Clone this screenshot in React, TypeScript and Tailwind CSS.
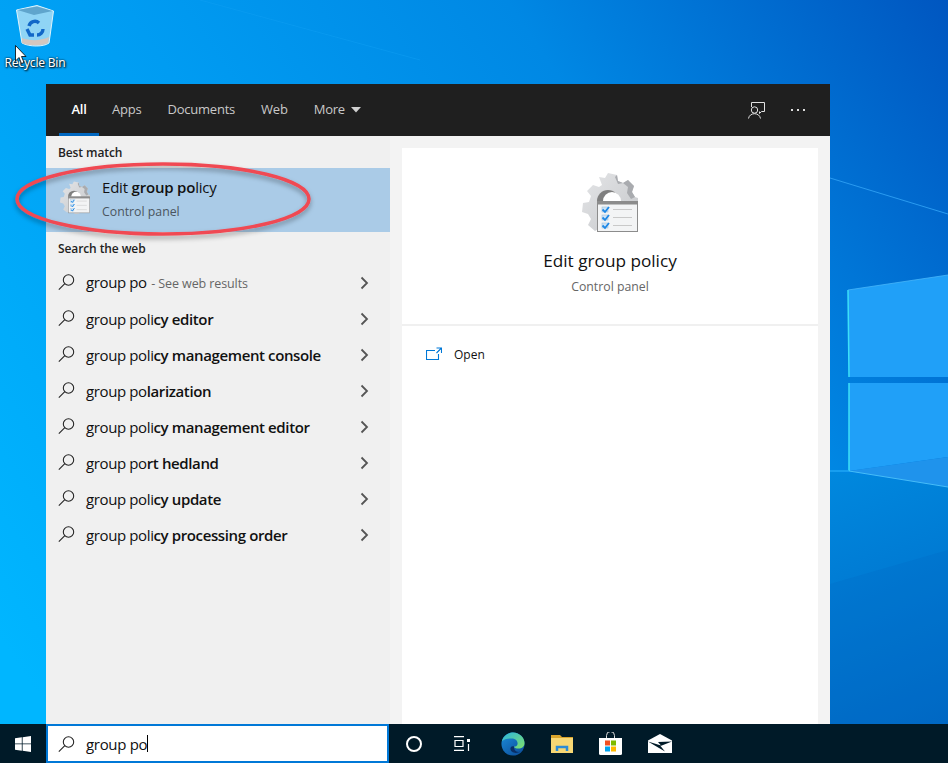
import React from "react";

const font = { fontFamily: '"Open Sans","Noto Sans",sans-serif' };

function Mag({ className = "" }: { className?: string }) {
  return (
    <svg viewBox="0 0 17 16" className={className} fill="none" stroke="currentColor" strokeWidth="1.050">
      <circle cx="10.500" cy="6" r="5.200" />
      <path d="M6.800 9.700 .8 15.600" />
    </svg>
  );
}

function Gear({ size, id }: { size: number; id: string }) {
  return (
    <svg viewBox="0 0 56 60" width={size} height={size * 60 / 56}>
      <defs>
        <linearGradient id={id} x1="0" y1="0" x2="1" y2="1">
          <stop offset="0" stopColor="#e4e5e7" />
          <stop offset="1" stopColor="#c4c6c9" />
        </linearGradient>
      </defs>
      <path
        d="M17 5l6 1 3-5 9 2 1 6 5 2 5-3 6 6-2 6 3 5 6 2-1 8-6 2-1 6 3 5-6 6-6-2-5 3-1 6-8 1-4-5-6-1-5 3-7-6 3-6-3-5-6-2 1-9 6-1 2-6-4-5 6-6 6 2 3-2z"
        fill={`url(#${id})`}
      />
      <path d="M35 3l1 6 5 2 5-3 6 6-2 6 3 5-4 2-4-6 1-6-5-4-5 1-3-7z" fill="#a9abaf" />
      <circle cx="26" cy="29" r="11" fill="#7f7f7f" />
      <circle cx="30" cy="29" r="9" fill="#fff" />
      <rect x="15.500" y="29.500" width="40" height="30" fill="#f3f4f5" stroke="#8c8c8c" />
      <rect x="15" y="29" width="41" height="3.500" fill="#8c8c8c" />
      <g fill="#cfe4f6" stroke="#8fb6d8" strokeWidth="0.500">
        <rect x="20" y="35" width="6" height="5" />
        <rect x="20" y="43" width="6" height="5" />
        <rect x="20" y="51" width="6" height="5" />
      </g>
      <g fill="none" stroke="#1e88e5" strokeWidth="1.800">
        <path d="M20.500 37.500l2.500 2.500 4-5M20.500 45.500l2.500 2.500 4-5M20.500 53.500l2.500 2.500 4-5" />
      </g>
      <g stroke="#c9c9c9" strokeWidth="1">
        <path d="M31 37.500h19M31 45.500h19M31 53.500h19" />
      </g>
    </svg>
  );
}

const rows: [string, string][] = [
  ["group poli", "cy editor"],
  ["group poli", "cy management console"],
  ["group po", "larization"],
  ["group poli", "cy management editor"],
  ["group po", "rt hedland"],
  ["group poli", "cy update"],
  ["group poli", "cy processing order"],
];

function Chevron() {
  return (
    <svg viewBox="0 0 10 14" className="w-[10px] h-[14px] text-[#555] -ml-[1px]" fill="none" stroke="currentColor" strokeWidth="1.800">
      <path d="M2.500 1.500 8 7l-5.500 5.500" />
    </svg>
  );
}

function Row({ children, up }: { children: React.ReactNode; up?: boolean }) {
  return (
    <div className="h-9 flex items-center pl-[12px] pr-[21px] text-[15px] text-[#111]">
      <Mag className="w-[17px] h-[16px] text-[#222] shrink-0 -mt-[2px]" />
      <div className={`ml-[11px] flex-1 whitespace-nowrap tracking-[-0.38px] ${up ? "-mt-[1px]" : ""}`}>{children}</div>
      <Chevron />
    </div>
  );
}

export default function App() {
  return (
    <div className="relative w-[948px] h-[763px] overflow-hidden bg-[#0078d7] flex flex-col" style={font}>
      {/* wallpaper */}
      <svg className="absolute inset-0" width="948" height="763" viewBox="0 0 948 763">
        <defs>
          <linearGradient id="bg" gradientUnits="userSpaceOnUse" x1="0" y1="640" x2="948" y2="0">
            <stop offset="0" stopColor="#00b6ff" />
            <stop offset="0.4" stopColor="#009cf2" />
            <stop offset="0.68" stopColor="#0088e4" />
            <stop offset="1" stopColor="#0056c0" />
          </linearGradient>
          <linearGradient id="low" gradientUnits="userSpaceOnUse" x1="840" y1="470" x2="948" y2="730">
            <stop offset="0" stopColor="#0088de" />
            <stop offset="1" stopColor="#0068c4" />
          </linearGradient>
        </defs>
        <rect width="948" height="763" fill="url(#bg)" />
        <path d="M830 471 948 487V763H830Z" fill="url(#low)" />
        <path d="M830 584 948 550V763H830Z" fill="#0068c4" fillOpacity="0.25" />
        <path d="M830 178 948 214" stroke="#2a9bf0" strokeWidth="1" />
        <path d="M848 290 948 275V377H849Z" fill="#20a0f8" />
        <path d="M849 383H948V457L849 471Z" fill="#20a0f8" />
        <path d="M849 471 948 457V487Z" fill="#1f93ec" />
        <path d="M848 290 849 377M849 383V471" stroke="#3ce0f8" strokeWidth="1.500" />
        <path d="M849 471 948 487" stroke="#46bdf8" strokeWidth="1" />
        <path d="M848 290 948 275" stroke="#47b6fa" strokeWidth="0.800" />
        <path d="M830 471H849" stroke="#1fa6f4" strokeWidth="1.500" />
        <path d="M200 0 420 60" stroke="#0ea0f4" strokeWidth="1" strokeOpacity="0.5" />
      </svg>

      {/* recycle bin */}
      <div className="absolute left-0 top-[5px] w-[70px] flex flex-col items-center">
        <svg viewBox="0 0 38 42" className="w-[38px] h-[42px]">
          <path d="M.5 5 21 .5 37.500 6 33 38c-5 4-20 4-27 0Z" fill="#bfe6f6" fillOpacity="0.75" stroke="#dff3fb" />
          <path d="M1.500 5 21 1.500 36.500 6 18 10Z" fill="#5fa5cd" />
          <path d="M6 33c8 3 18 3 27-1l-1 6c-6 3-20 3-26 0Z" fill="#d3c7c0" />
          <path d="M13 21a6 6 0 0 1 10-3M27 24a6 6 0 0 1-6 6M11 24l3 6h4" fill="none" stroke="#1167c8" strokeWidth="3.400" />
        </svg>
        <div
          className="mt-[8px] text-[12px] leading-[16px] text-white whitespace-nowrap [text-shadow:1px_1px_2px_#000,0_0_2px_#000] tracking-[-0.2px]"
          style={{ fontFamily: '"Noto Sans",sans-serif' }}
        >
          Recycle Bin
        </div>
      </div>
      <svg viewBox="0 0 12 20" className="absolute left-[15px] top-[45px] w-[12px] h-[20px]">
        <path d="M.5.5V16l3.500-3.500 2.500 6 2.500-1-2.500-6H11Z" fill="#fff" stroke="#000" strokeWidth="0.800" />
      </svg>

      <div className="flex-1 relative pl-[46px] pr-[118px] pt-[84px] min-h-0">
        {/* search panel */}
        <div className="h-full flex flex-col">
          <div className="h-[52px] bg-[#1f1f1f] flex items-stretch pl-[13px] pr-[25px] text-[13px] text-[#c9c9c9] shrink-0 tracking-[-0.22px]">
            <div className="w-[40px] flex items-center justify-center font-semibold text-white border-b-[3px] border-[#0067c0] pt-[3px]">All</div>
            <div className="ml-[13px] flex items-center">Apps</div>
            <div className="ml-[26px] flex items-center">Documents</div>
            <div className="ml-[26px] flex items-center">Web</div>
            <div className="ml-[26px] flex items-center gap-[6px]">
              More
              <svg viewBox="0 0 10 6" className="w-[10px] h-[6px]"><path d="M0 0h10L5 5.500z" fill="#d0d0d0" /></svg>
            </div>
            <div className="flex-1" />
            <div className="flex items-center gap-[26px]">
              <svg viewBox="0 0 17 17" className="w-[17px] h-[17px] text-[#e2e2e2]" fill="none" stroke="currentColor" strokeWidth="1">
                <path d="M3.500 5V.5h13v9h-3l-2 2v-2" />
                <circle cx="6.500" cy="8" r="3.200" />
                <path d="M.5 16.500c.5-3 3-4.800 6-4.800s5.500 1.800 6 4.800" />
              </svg>
              <div className="flex gap-[4px]">
                <div className="w-[2px] h-[2px] bg-[#ddd]" />
                <div className="w-[2px] h-[2px] bg-[#ddd]" />
                <div className="w-[2px] h-[2px] bg-[#ddd]" />
              </div>
            </div>
          </div>

          <div className="flex-1 flex min-h-0">
            {/* left */}
            <div className="w-[344px] bg-[#f0f0f0] flex flex-col">
              <div className="h-[32px] pl-[12px] flex items-end pb-[9px] text-[12px] font-semibold text-[#222] leading-none tracking-[-0.1px]">Best match</div>
              <div className="h-[64px] bg-[#aacbe7] flex items-center pl-[13px]">
                <div className="-mt-[5px] ml-[1px]"><Gear size={30} id="g1" /></div>
                <div className="ml-[12px] flex flex-col">
                  <div className="text-[15px] leading-[20px] text-[#111] tracking-[-0.2px] -mt-[3px]">
                    Edit <span className="font-semibold">group po</span>licy
                  </div>
                  <div className="mt-[7px] text-[12.300px] leading-[16px] text-[#4a5560]">Control panel</div>
                </div>
              </div>
              <div className="h-[33px] pl-[12px] flex items-end pb-[10px] text-[12px] font-semibold text-[#222] leading-none tracking-[-0.1px]">Search the web</div>
              <Row up>
                group po <span className="text-[12.500px] text-[#666] tracking-[-0.1px] ml-[1px]">- See web results</span>
              </Row>
              {rows.map(([a, b]) => (
                <Row key={b}>
                  {a}
                  <span className="font-semibold">{b}</span>
                </Row>
              ))}
            </div>
            {/* right */}
            <div className="flex-1 bg-[#f3f3f3] pt-[12px] pl-[12px] pr-[12px]">
              <div className="h-full bg-white flex flex-col">
                <div className="h-[178px] border-b-2 border-[#f0f0f0] flex flex-col items-center pt-[24px]">
                  <Gear size={56} id="g2" />
                  <div className="mt-[17px] text-[17.200px] leading-[24px] text-[#111]">Edit group policy</div>
                  <div className="mt-[5px] text-[12.300px] leading-[18px] text-[#666]">Control panel</div>
                </div>
                <div className="pl-[24px] pt-[12px] flex items-center h-[46px] text-[12px] text-[#111]">
                  <svg viewBox="0 0 16 14" className="w-[16px] h-[14px] -mt-[3px] text-[#0078d7]" fill="none" stroke="currentColor" strokeWidth="1.100">
                    <path d="M9 3.500H.5v9h12V7" />
                    <path d="M10.500 1h5v5M15.500 1l-5 5" />
                  </svg>
                  <span className="ml-[12px]">Open</span>
                </div>
              </div>
            </div>
          </div>
        </div>
      </div>

      {/* taskbar */}
      <div className="relative h-[39px] bg-[#001a28] flex items-stretch shrink-0">
        <div className="w-[46px] flex items-center justify-center">
          <svg viewBox="0 0 16 16" className="w-[16px] h-[16px]">
            <path d="M0 2.300 6.800 1.300V7.500H0ZM7.600 1.200 16 0V7.500H7.600ZM0 8.300H6.800V14.700L0 13.700ZM7.600 8.300H16V16L7.600 14.800Z" fill="#fff" />
          </svg>
        </div>
        <div className="w-[343px] bg-white border-2 border-[#0078d7] flex items-center pl-[10px] text-[15px] text-[#111]">
          <Mag className="w-[17px] h-[16px] text-[#222]" />
          <span className="ml-[11px] tracking-[-0.32px] mt-[1px]">group po</span>
          <div className="w-px h-[17px] bg-black" />
        </div>
        <div className="flex items-center pl-[17px]">
          <div className="w-[16px] h-[16px] rounded-full border-[2.500px] border-white" />
          <svg viewBox="0 0 16 15" className="ml-[32px] w-[16px] h-[15px] -mt-[1px]" fill="none" stroke="#fff" strokeWidth="1.200">
            <path d="M0 .6h10M0 14.400h10M1 4.500h8v6H1z" />
            <rect x="13" y="3" width="3" height="3" fill="#fff" stroke="none" />
            <path d="M14.500 8v7" />
          </svg>
          <svg viewBox="0 0 26 26" className="ml-[31px] w-[24px] h-[24px]">
            <defs>
              <linearGradient id="e1" x1="0" y1="0" x2="0.8" y2="1">
                <stop offset="0" stopColor="#1c8fdc" />
                <stop offset="1" stopColor="#0c4f9c" />
              </linearGradient>
              <linearGradient id="e2" x1="0" y1="0" x2="1" y2="1">
                <stop offset="0" stopColor="#2bb6e0" />
                <stop offset="1" stopColor="#7fe06a" />
              </linearGradient>
            </defs>
            <circle cx="13" cy="13" r="12.500" fill="url(#e1)" />
            <path d="M1 10C3 3 9 .5 13 .5c7 0 12.500 5.500 12.500 11.500 0 4-3 6-6.500 6-3 0-4.500-1-5-2 2 0 4-1 4-3.500C18 9 15 7 11.500 7 7 7 3 8 1 10Z" fill="url(#e2)" />
            <path d="M14 15.500c-4-1-5 3-2 6 2 1.500 6 1.500 9 0-3 .5-7 0-7-6Z" fill="#0a2f66" />
          </svg>
          <svg viewBox="0 0 22 18" className="ml-[26px] w-[22px] h-[18px]">
            <path d="M0 0h9l2 2h11v3H0Z" fill="#d9a42c" />
            <rect x="0" y="3" width="22" height="15" fill="#f7d774" />
            <path d="M6 16v-4h10v4" fill="none" stroke="#2b8bd6" strokeWidth="2.500" />
            <rect x="8.500" y="14" width="5" height="4" fill="#f7d774" />
          </svg>
          <svg viewBox="0 0 23 23" className="ml-[26px] w-[23px] h-[23px]">
            <path d="M7.500 6V3.500a4 4 0 0 1 8 0V6" fill="none" stroke="#ddd" strokeWidth="1" />
            <path d="M0 6h23v15.500a1.500 1.500 0 0 1-1.500 1.500h-20A1.500 1.500 0 0 1 0 21.500Z" fill="#fff" />
            <rect x="6" y="8.500" width="5" height="5" fill="#f25022" />
            <rect x="12" y="8.500" width="5" height="5" fill="#7fba00" />
            <rect x="6" y="14.500" width="5" height="5" fill="#00a4ef" />
            <rect x="12" y="14.500" width="5" height="5" fill="#ffb900" />
          </svg>
          <svg viewBox="0 0 24 19" className="ml-[26px] w-[24px] h-[19px]">
            <path d="M0 6.500 12 0l12 6.500V19H0Z" fill="#fff" />
            <path d="M0 7.500 11 14l6 3.500-4.500-5.500L24 7.500 10 8l3 3.500Z" fill="#001a28" />
          </svg>
        </div>
      </div>

      {/* red annotation ellipse */}
      <svg className="absolute left-0 top-0 pointer-events-none" width="330" height="250" viewBox="0 0 330 250">
        <defs>
          <filter id="sh" x="-10%" y="-20%" width="120%" height="140%">
            <feDropShadow dx="0" dy="3" stdDeviation="2.500" floodColor="#000" floodOpacity="0.35" />
          </filter>
        </defs>
        <ellipse cx="163" cy="199" rx="146" ry="35" fill="none" stroke="#f04a52" strokeWidth="3.500" filter="url(#sh)" />
      </svg>
    </div>
  );
}
